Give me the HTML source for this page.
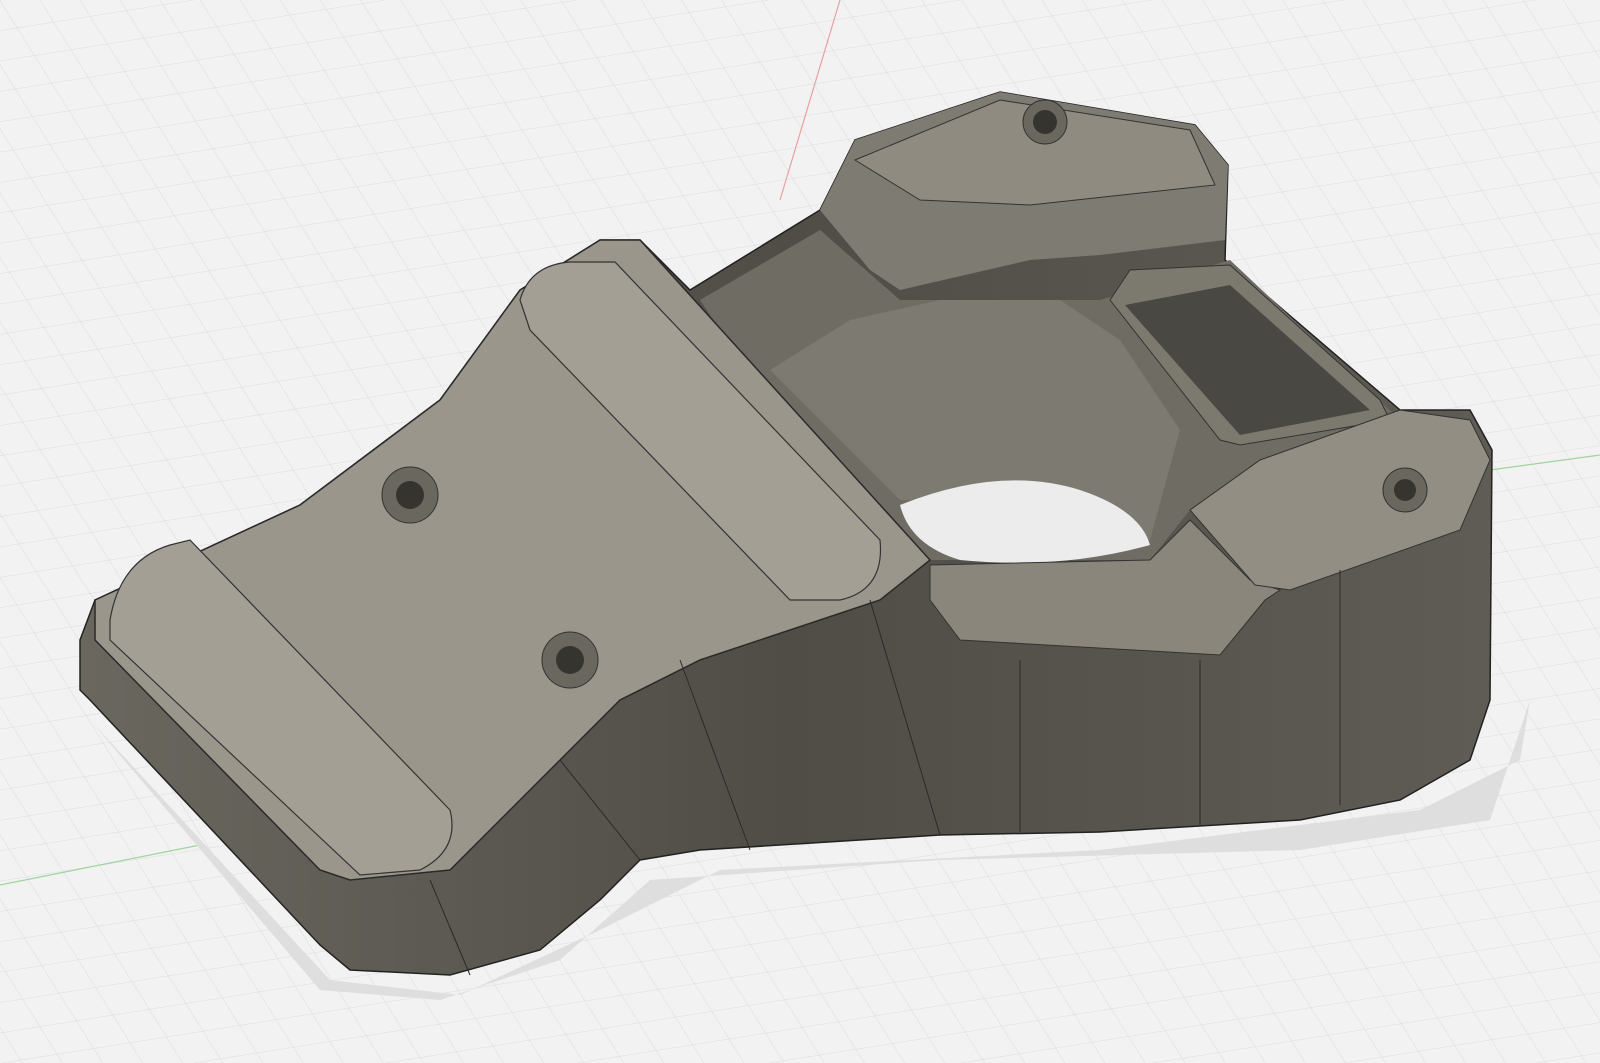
<!DOCTYPE html>
<html><head><meta charset="utf-8"><style>
html,body{margin:0;padding:0;background:#f2f2f2;}
svg{display:block}
</style></head><body>
<svg width="1600" height="1063" viewBox="0 0 1600 1063" xmlns="http://www.w3.org/2000/svg">
<defs>
<pattern id="g1" width="30" height="30" patternUnits="userSpaceOnUse" patternTransform="rotate(-9)">
<path d="M0 0H30" stroke="#dcdcdc" stroke-width="1"/>
</pattern>
<pattern id="g2" width="34" height="34" patternUnits="userSpaceOnUse" patternTransform="rotate(58)">
<path d="M0 0H34" stroke="#dcdcdc" stroke-width="1"/>
</pattern>
<linearGradient id="side" x1="0" y1="0" x2="1" y2="0">
<stop offset="0" stop-color="#6a675f"/><stop offset="0.5" stop-color="#4f4d46"/><stop offset="1" stop-color="#5f5c55"/>
</linearGradient>
</defs>
<rect width="1600" height="1063" fill="#f2f2f2"/>
<rect width="1600" height="1063" fill="url(#g1)"/>
<rect width="1600" height="1063" fill="url(#g2)"/>
<line x1="780" y1="200" x2="840" y2="0" stroke="#e8a0a0" stroke-width="1.2"/>
<line x1="0" y1="885" x2="200" y2="845" stroke="#9fd49f" stroke-width="1.2"/>
<line x1="1490" y1="470" x2="1600" y2="455" stroke="#9fd49f" stroke-width="1.2"/>
<!-- shadow -->
<path d="M90,720 L330,980 L460,995 L600,930 L720,870 L1100,850 L1420,810 L1520,760 L1530,700 L1490,820 L1300,850 L940,860 L650,880 L560,960 L440,1000 L320,990 Z" fill="#dedede"/>
<!-- silhouette -->
<path d="M80,640 L95,600 L300,505 L440,400 L520,290 L600,240 L640,240 L690,290 L820,210 L855,140 L1000,92 L1195,125 L1228,165 L1225,260 L1400,410 L1470,410 L1492,450 L1490,700 L1470,760 L1400,800 L1300,820 L1100,832 L940,835 L700,850 L640,860 L600,900 L540,950 L450,975 L350,970 L320,945 L90,700 L80,690 Z" fill="url(#side)" stroke="#222" stroke-width="1.5"/>
<!-- inner ring wall -->
<path d="M700,300 L820,230 L900,300 L1100,300 L1230,260 L1400,420 L1260,470 L1190,510 L1150,560 L930,560 L760,390 Z" fill="#6f6c64"/>
<path d="M770,370 L850,320 L940,300 L1060,300 L1120,340 L1180,430 L1150,540 L1000,500 L900,500 L840,440 Z" fill="#7d7a71"/>
<!-- through hole -->
<path d="M900,505 Q1000,465 1080,490 Q1140,510 1150,545 Q1060,570 960,560 Q910,545 900,505 Z" fill="#ececec"/>
<!-- rectangular pocket -->
<path d="M1110,300 L1130,270 L1230,265 L1380,400 L1390,420 L1240,445 L1220,440 Z" fill="#7c796f" stroke="#333" stroke-width="1"/>
<path d="M1125,305 L1230,285 L1370,410 L1240,435 Z" fill="#4a4842"/>
<!-- back hexagon top -->
<path d="M820,210 L855,140 L1000,92 L1195,125 L1228,165 L1225,240 L1100,255 L1030,260 L900,290 L870,270 Z" fill="#7e7b72"/>
<path d="M855,160 L1000,100 L1190,130 L1215,185 L1030,205 L920,200 Z" fill="#8f8b81" stroke="#333" stroke-width="1"/>
<circle cx="1045" cy="122" r="22" fill="#6a675f" stroke="#333"/><circle cx="1045" cy="122" r="12" fill="#35342f"/>
<!-- floor ledge right -->
<path d="M930,600 L960,640 L1220,655 L1265,600 L1280,590 L1250,580 L1190,520 L1150,560 L930,565 Z" fill="#8a867c" stroke="#333" stroke-width="1"/>
<!-- right arm top -->
<path d="M1190,510 L1260,460 L1400,410 L1470,420 L1490,460 L1460,530 L1290,590 L1255,585 Z" fill="#928e84" stroke="#333" stroke-width="1"/>
<circle cx="1405" cy="490" r="22" fill="#6a675f" stroke="#333"/><circle cx="1405" cy="490" r="11" fill="#35342f"/>
<!-- left plate top -->
<path d="M95,600 L300,505 L440,400 L520,290 L600,240 L640,240 L930,560 L880,600 L700,660 L620,700 L560,760 L450,870 L350,880 L320,870 L95,640 Z" fill="#9a968c" stroke="#2a2a2a" stroke-width="1.5"/>
<!-- pads -->
<path d="M520,300 Q530,265 570,262 L615,262 L880,540 Q885,590 840,600 L790,600 L530,330 Z" fill="#a39f95" stroke="#333" stroke-width="1.2"/>
<path d="M110,620 Q120,560 170,545 L190,540 L450,810 Q460,850 420,870 L360,875 L110,640 Z" fill="#a39f95" stroke="#333" stroke-width="1.2"/>
<circle cx="410" cy="495" r="28" fill="#6a675f" stroke="#333"/><circle cx="410" cy="495" r="14" fill="#35342f"/>
<circle cx="570" cy="660" r="28" fill="#6a675f" stroke="#333"/><circle cx="570" cy="660" r="14" fill="#35342f"/>
<!-- edge lines on sides -->
<g stroke="#2a2a2a" stroke-width="1" fill="none">
<path d="M680,660 L750,850"/><path d="M870,600 L940,835"/><path d="M1020,660 L1020,832"/><path d="M1200,660 L1200,825"/><path d="M1340,570 L1340,805"/><path d="M430,880 L470,975"/><path d="M560,760 L640,860"/>
</g>
</svg>
</body></html>
